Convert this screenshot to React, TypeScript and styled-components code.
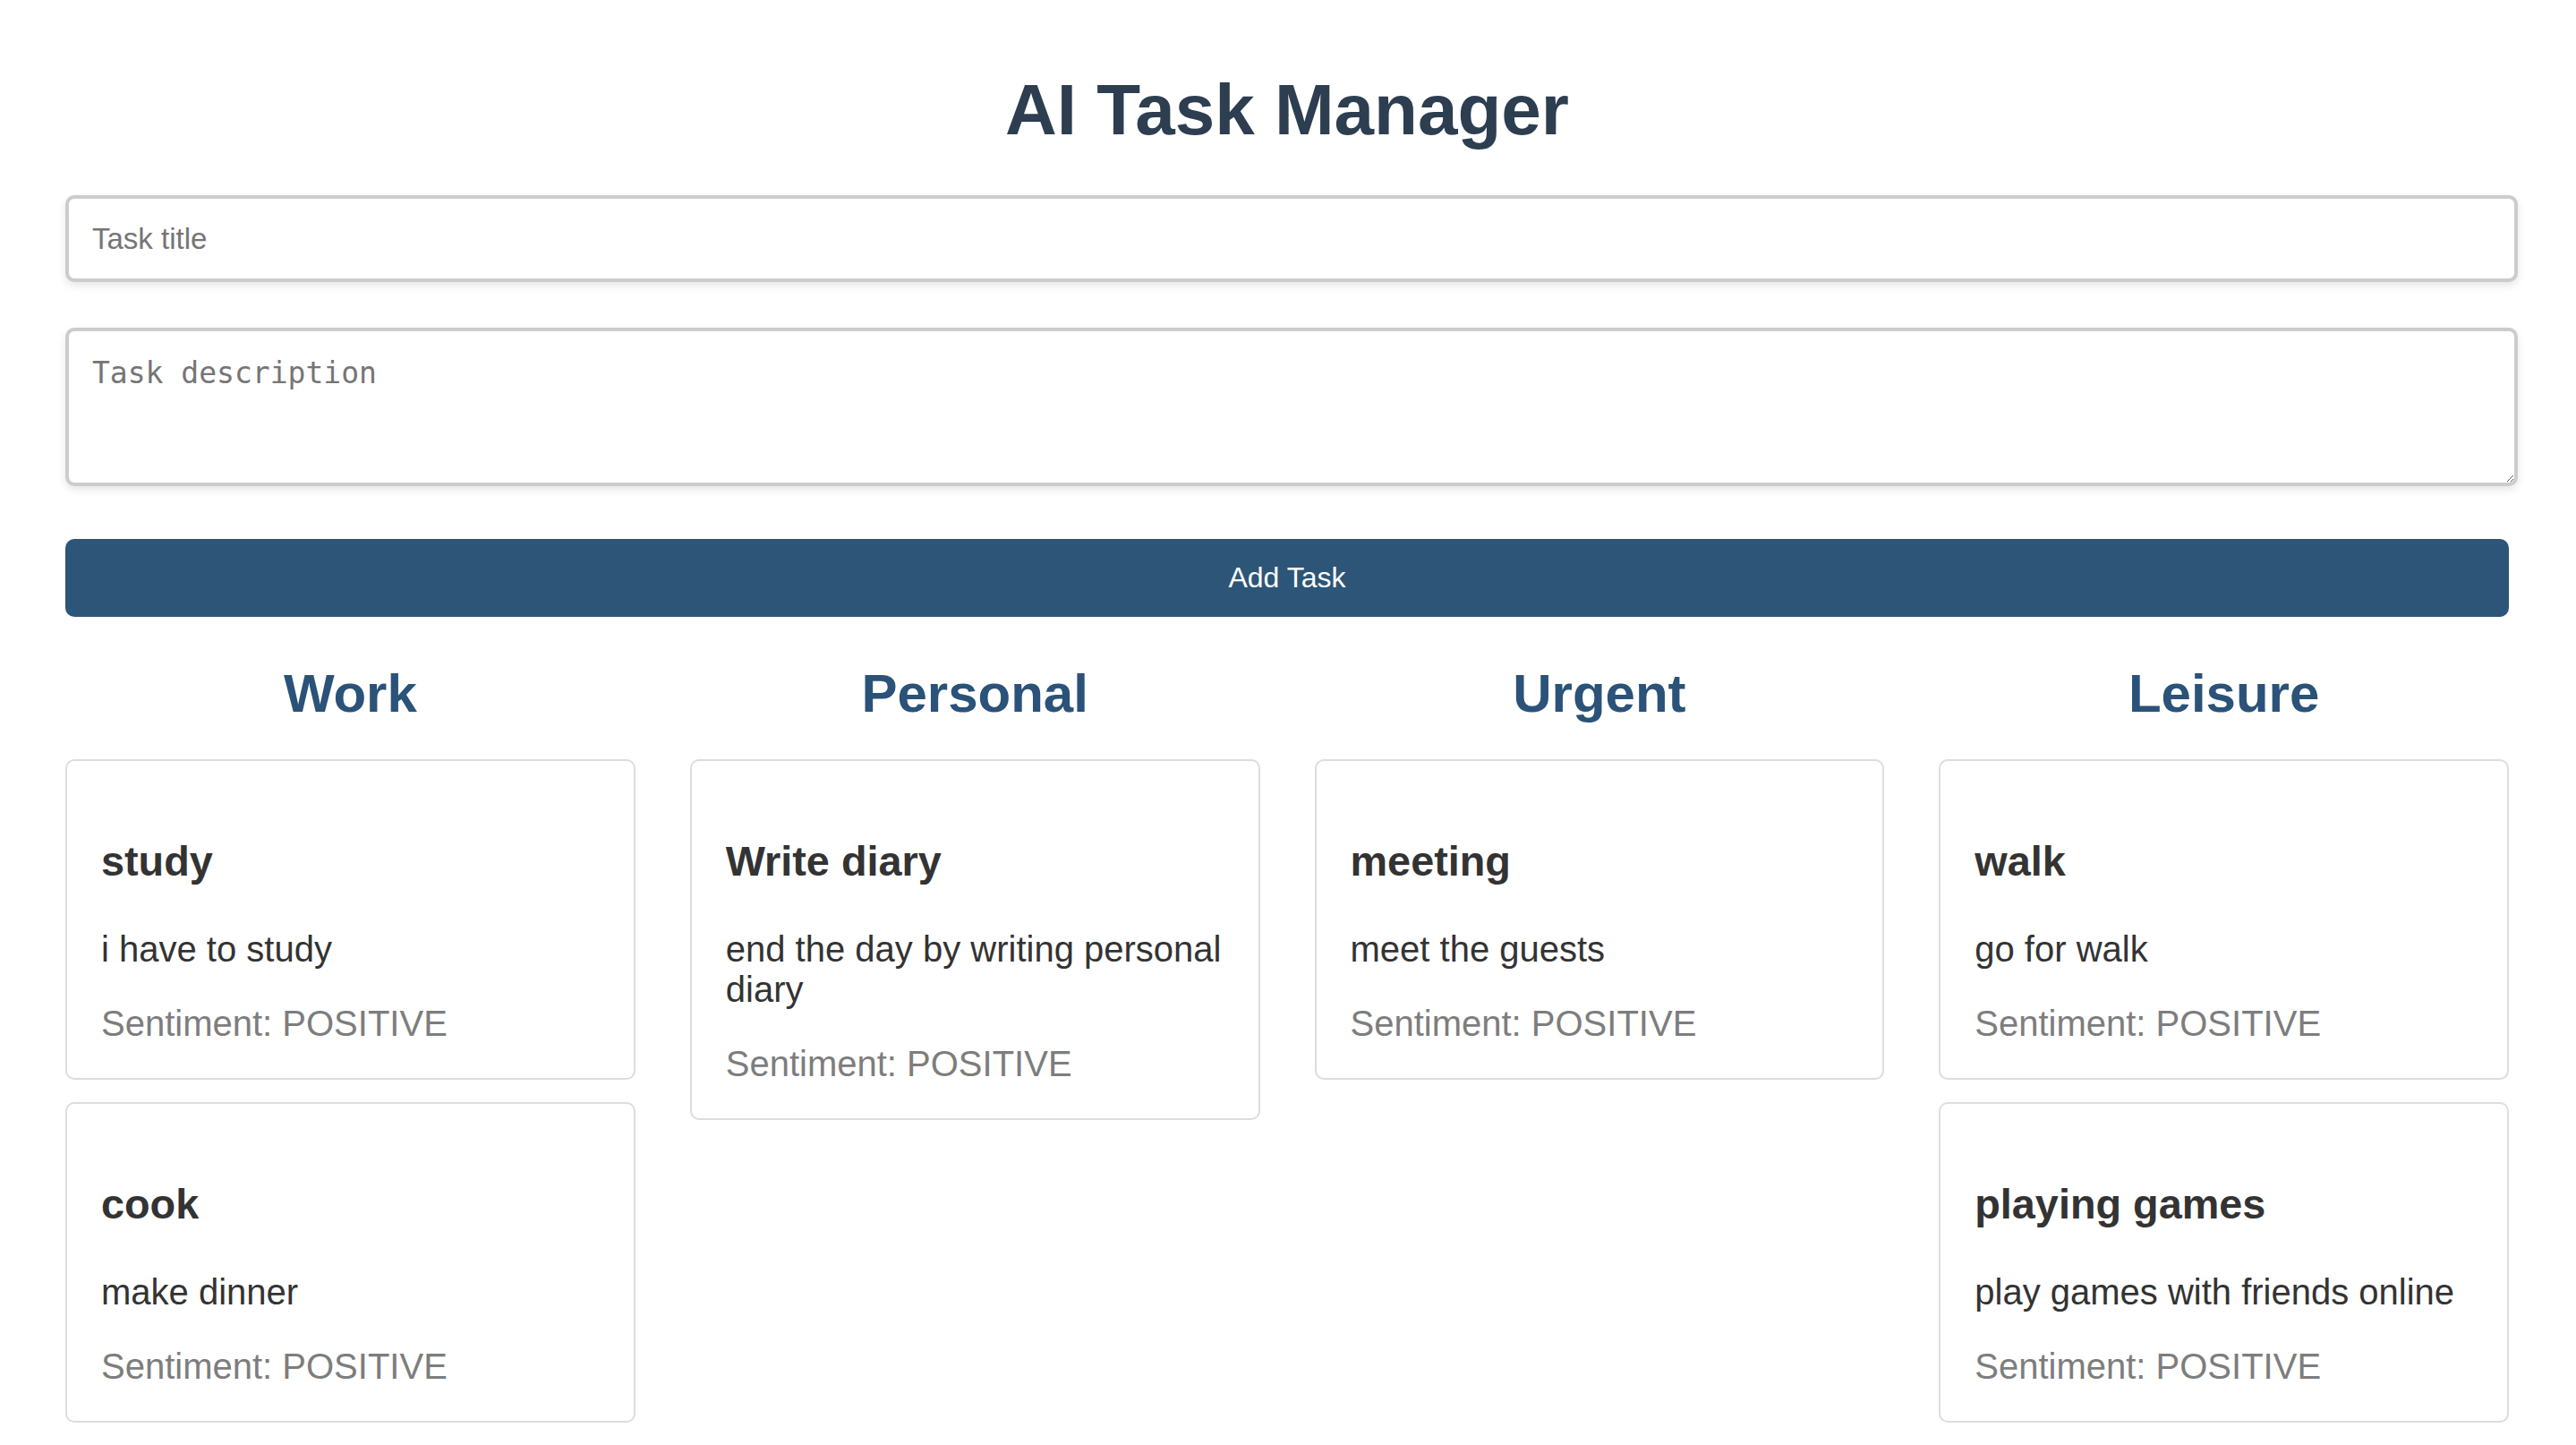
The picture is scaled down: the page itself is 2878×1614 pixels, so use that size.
import React from "react";
import styled, { createGlobalStyle } from "styled-components";

const GlobalStyle = createGlobalStyle`
  html { scrollbar-width: none; }
  html::-webkit-scrollbar { display: none; }
  body {
    margin: 0;
    background: #ffffff;
    font-family: "Liberation Sans", Arial, sans-serif;
    color: #333333;
  }
`;

const Page = styled.div`
  width: 2730px;
  margin: 0 auto;
  padding: 77px 0 40px;
  box-sizing: border-box;
  transform: translateX(-1px);
`;

const Title = styled.h1`
  margin: 0 0 49px;
  text-align: center;
  font-size: 80px;
  font-weight: 700;
  color: #2c3e50;
`;

const fieldBase = `
  display: block;
  width: calc(100% + 10px);
  box-sizing: border-box;
  border: 4px solid #cccccc;
  border-radius: 10px;
  background: #ffffff;
  box-shadow: 0 4px 10px rgba(0, 0, 0, 0.1);
  color: #333333;
  outline: none;
  &::placeholder { color: #757575; }
`;

const TitleInput = styled.input`
  ${fieldBase}
  height: 97px;
  padding: 0 26px;
  margin: 0 0 51px;
  font-family: "Liberation Sans", Arial, sans-serif;
  font-size: 33px;
`;

const DescArea = styled.textarea`
  ${fieldBase}
  height: 177px;
  padding: 27px 26px 21px;
  margin: 0 0 59px;
  font-family: "DejaVu Sans Mono", monospace;
  font-size: 33px;
  resize: vertical;
`;

const AddButton = styled.button`
  display: block;
  width: 100%;
  height: 87px;
  border: none;
  border-radius: 10px;
  background: #2d5577;
  color: #ffffff;
  font-family: "Liberation Sans", Arial, sans-serif;
  font-size: 32px;
  cursor: pointer;
  margin: 0 0 51px;
`;

const Board = styled.div`
  display: grid;
  grid-template-columns: repeat(4, 1fr);
  column-gap: 61px;
  align-items: start;
`;

const Column = styled.section`
  display: flex;
  flex-direction: column;
  gap: 25px;
`;

const ColumnTitle = styled.h2`
  margin: 0 0 14px;
  text-align: center;
  font-size: 60px;
  font-weight: 700;
  color: #2b5278;
`;

const Card = styled.div`
  border: 2px solid #dddddd;
  border-radius: 10px;
  background: #ffffff;
  padding: 38px 38px 38px;
`;

const CardTitle = styled.h3`
  margin: 46.8px 0 49px;
  font-size: 46.8px;
  font-weight: 700;
  color: #333333;
`;

const CardText = styled.p`
  margin: 40px 0 38px;
  font-size: 40px;
  color: #333333;
`;

const Sentiment = styled.div`
  font-size: 40px;
  color: #7d7d7d;
`;

type Task = { title: string; description: string; sentiment: string };

const columns: { name: string; tasks: Task[] }[] = [
  {
    name: "Work",
    tasks: [
      { title: "study", description: "i have to study", sentiment: "POSITIVE" },
      { title: "cook", description: "make dinner", sentiment: "POSITIVE" },
      { title: "code", description: "finish the project", sentiment: "POSITIVE" },
    ],
  },
  {
    name: "Personal",
    tasks: [
      {
        title: "Write diary",
        description: "end the day by writing personal diary",
        sentiment: "POSITIVE",
      },
    ],
  },
  {
    name: "Urgent",
    tasks: [{ title: "meeting", description: "meet the guests", sentiment: "POSITIVE" }],
  },
  {
    name: "Leisure",
    tasks: [
      { title: "walk", description: "go for walk", sentiment: "POSITIVE" },
      {
        title: "playing games",
        description: "play games with friends online",
        sentiment: "POSITIVE",
      },
    ],
  },
];

export default function App() {
  return (
    <>
      <GlobalStyle />
      <Page>
        <Title>AI Task Manager</Title>
        <TitleInput placeholder="Task title" />
        <DescArea placeholder="Task description" />
        <AddButton>Add Task</AddButton>
        <Board>
          {columns.map((col) => (
            <Column key={col.name}>
              <ColumnTitle>{col.name}</ColumnTitle>
              {col.tasks.map((t) => (
                <Card key={t.title}>
                  <CardTitle>{t.title}</CardTitle>
                  <CardText>{t.description}</CardText>
                  <Sentiment>Sentiment: {t.sentiment}</Sentiment>
                </Card>
              ))}
            </Column>
          ))}
        </Board>
      </Page>
    </>
  );
}
